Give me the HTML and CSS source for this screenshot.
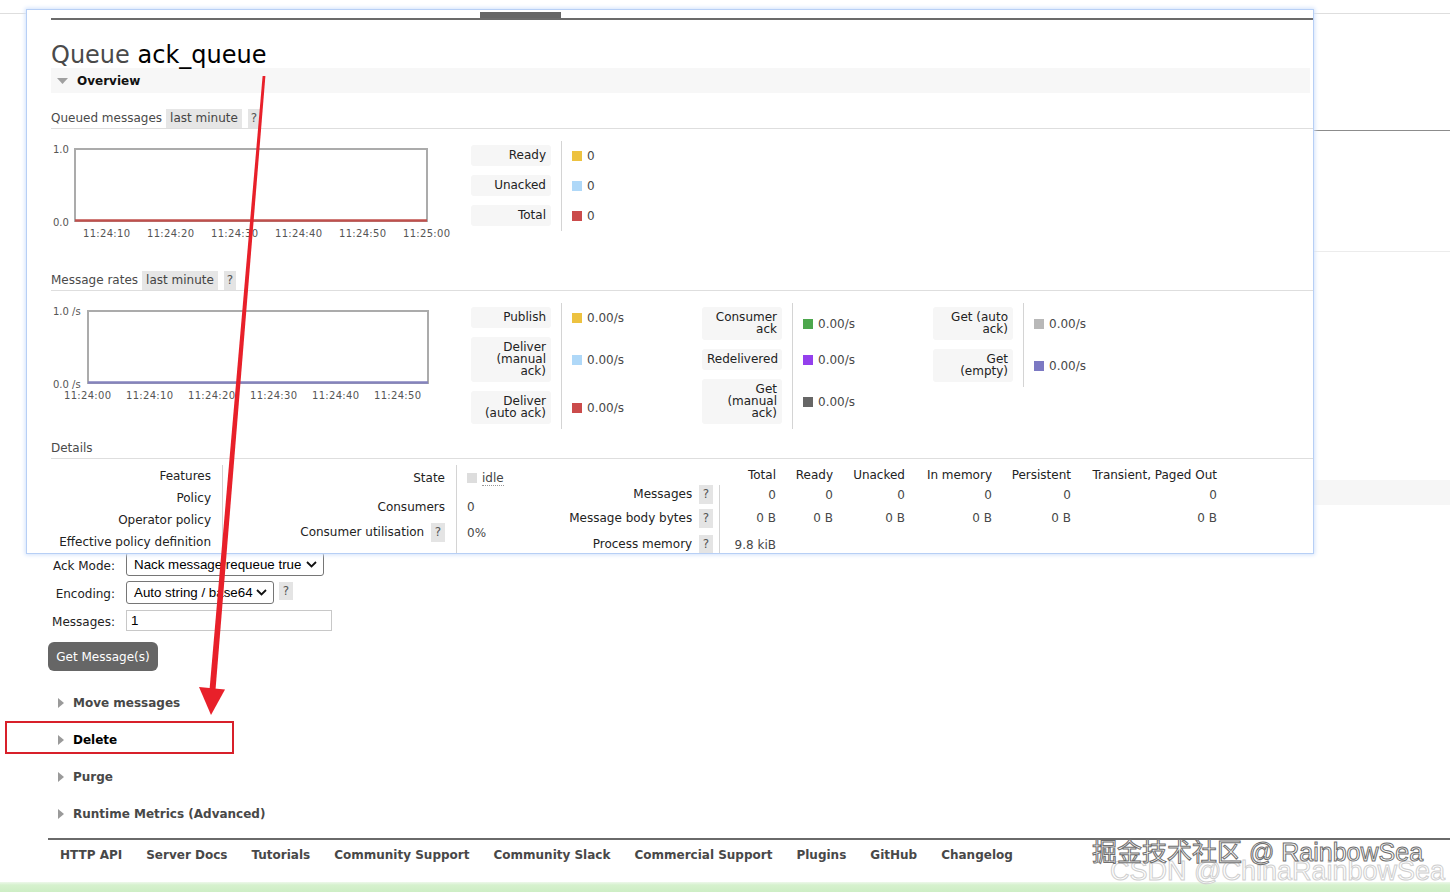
FILE: index.html
```html
<!DOCTYPE html>
<html>
<head>
<meta charset="utf-8">
<title>Queue ack_queue</title>
<link rel="stylesheet" href="styles.css">
</head>
<body>
<div class="page">
  <div class="bg-rule"></div>
  <div class="bg-b1"></div>
  <div class="bg-b2"></div>
  <div class="bg-b3"></div>

  <div class="getform">
    <div class="frow fr1">
      <label class="flabel">Ack Mode:</label>
      <div class="sel sel-ack"><span>Nack message requeue true</span><svg class="chev" width="11" height="7" viewBox="0 0 11 7"><path d="M1 1 L5.5 5.5 L10 1" fill="none" stroke="#111" stroke-width="1.8"/></svg></div>
    </div>
    <div class="frow fr2">
      <label class="flabel">Encoding:</label>
      <div class="sel sel-enc"><span>Auto string / base64</span><svg class="chev" width="11" height="7" viewBox="0 0 11 7"><path d="M1 1 L5.5 5.5 L10 1" fill="none" stroke="#111" stroke-width="1.8"/></svg></div>
      <span class="help fhelp">?</span>
    </div>
    <div class="frow fr3">
      <label class="flabel">Messages:</label>
      <div class="inp">1</div>
    </div>
    <button class="btn">Get Message(s)</button>
  </div>

  <div class="sections">
    <div class="sec"><svg width="6" height="10" viewBox="0 0 6 10"><polygon points="0,0 6,5 0,10" fill="#9a9a9a"/></svg><span>Move messages</span></div>
    <div class="sec sec-del"><svg width="6" height="10" viewBox="0 0 6 10"><polygon points="0,0 6,5 0,10" fill="#9a9a9a"/></svg><span>Delete</span></div>
    <div class="sec"><svg width="6" height="10" viewBox="0 0 6 10"><polygon points="0,0 6,5 0,10" fill="#9a9a9a"/></svg><span>Purge</span></div>
    <div class="sec"><svg width="6" height="10" viewBox="0 0 6 10"><polygon points="0,0 6,5 0,10" fill="#9a9a9a"/></svg><span>Runtime Metrics (Advanced)</span></div>
  </div>

  <div class="footer-rule"></div>
  <div class="footer">
    <a>HTTP API</a><a>Server Docs</a><a>Tutorials</a><a>Community Support</a><a>Community Slack</a><a>Commercial Support</a><a>Plugins</a><a>GitHub</a><a>Changelog</a>
  </div>
  <div class="greenbar"></div>
</div>

<div class="panel">
  <div class="ptab"></div>
  <div class="prule"></div>
  <h1 class="title">Queue <span class="qname">ack_queue</span></h1>
  <div class="overview"><svg width="11" height="6" viewBox="0 0 11 6"><polygon points="0,0 11,0 5.5,6" fill="#a0a0a0"/></svg><span>Overview</span></div>

  <div class="h3 h3-q"><span>Queued messages</span><span class="tag">last minute</span><span class="help hh">?</span></div>
  <div class="chartrow cr1">
    <svg class="chart" width="420" height="100" viewBox="0 0 420 100">
      <text x="2" y="12" class="yl">1.0</text>
      <text x="2" y="85" class="yl">0.0</text>
      <rect x="24" y="8" width="352" height="72" fill="#fff" stroke="#ababab" stroke-width="2"/>
      <line x1="24" y1="79.5" x2="376" y2="79.5" stroke="#c0504d" stroke-width="2.5"/>
      <text x="32" y="96" class="xl">11:24:10</text>
      <text x="96" y="96" class="xl">11:24:20</text>
      <text x="160" y="96" class="xl">11:24:30</text>
      <text x="224" y="96" class="xl">11:24:40</text>
      <text x="288" y="96" class="xl">11:24:50</text>
      <text x="352" y="96" class="xl">11:25:00</text>
    </svg>
    <table class="legend">
      <tr><th><div class="lbl">Ready</div></th><td><span class="sw c-yellow"></span>0</td></tr>
      <tr><th><div class="lbl">Unacked</div></th><td><span class="sw c-lblue"></span>0</td></tr>
      <tr><th><div class="lbl">Total</div></th><td><span class="sw c-red"></span>0</td></tr>
    </table>
  </div>

  <div class="h3 h3-r"><span>Message rates</span><span class="tag">last minute</span><span class="help hh">?</span></div>
  <div class="chartrow cr2">
    <svg class="chart" width="420" height="100" viewBox="0 0 420 100">
      <text x="2" y="12" class="yl">1.0 /s</text>
      <text x="2" y="85" class="yl">0.0 /s</text>
      <rect x="37" y="8" width="340" height="72" fill="#fff" stroke="#ababab" stroke-width="2"/>
      <line x1="37" y1="79.5" x2="377" y2="79.5" stroke="#8583bd" stroke-width="2.5"/>
      <text x="13" y="96" class="xl">11:24:00</text>
      <text x="75" y="96" class="xl">11:24:10</text>
      <text x="137" y="96" class="xl">11:24:20</text>
      <text x="199" y="96" class="xl">11:24:30</text>
      <text x="261" y="96" class="xl">11:24:40</text>
      <text x="323" y="96" class="xl">11:24:50</text>
    </svg>
    <div class="legcols">
      <div class="lcol">
        <table class="legend">
          <tr><th><div class="lbl">Publish</div></th><td><span class="sw c-yellow"></span>0.00/s</td></tr>
          <tr><th><div class="lbl">Deliver<br>(manual<br>ack)</div></th><td><span class="sw c-lblue"></span>0.00/s</td></tr>
          <tr><th><div class="lbl">Deliver<br>(auto ack)</div></th><td><span class="sw c-red"></span>0.00/s</td></tr>
        </table>
      </div>
      <div class="lcol">
        <table class="legend">
          <tr><th><div class="lbl">Consumer<br>ack</div></th><td><span class="sw c-green"></span>0.00/s</td></tr>
          <tr><th><div class="lbl">Redelivered</div></th><td><span class="sw c-purple"></span>0.00/s</td></tr>
          <tr><th><div class="lbl">Get<br>(manual<br>ack)</div></th><td><span class="sw c-dgray"></span>0.00/s</td></tr>
        </table>
      </div>
      <div class="lcol">
        <table class="legend">
          <tr><th><div class="lbl">Get (auto<br>ack)</div></th><td><span class="sw c-lgray"></span>0.00/s</td></tr>
          <tr><th><div class="lbl">Get<br>(empty)</div></th><td><span class="sw c-violet"></span>0.00/s</td></tr>
        </table>
      </div>
    </div>
  </div>

  <div class="h3 h3-d"><span>Details</span></div>
  <div class="details">
    <table class="kv kv-left">
      <tr><th>Features</th><td></td></tr>
      <tr><th>Policy</th><td></td></tr>
      <tr><th>Operator policy</th><td></td></tr>
      <tr><th>Effective policy definition</th><td></td></tr>
    </table>
    <table class="kv kv-mid">
      <tr class="m1"><th>State</th><td><span class="idle-sq"></span><span class="idle">idle</span></td></tr>
      <tr class="m2"><th>Consumers</th><td>0</td></tr>
      <tr class="m3"><th>Consumer utilisation <span class="help dh">?</span></th><td>0%</td></tr>
      <tr class="m4"><th></th><td></td></tr>
    </table>
    <table class="msgs">
      <tr class="mh"><th></th><th class="c1">Total</th><th class="c2">Ready</th><th class="c3">Unacked</th><th class="c4">In memory</th><th class="c5">Persistent</th><th class="c6">Transient, Paged Out</th></tr>
      <tr class="ma"><th class="rl">Messages <span class="help dh">?</span></th><td class="first">0</td><td>0</td><td>0</td><td>0</td><td>0</td><td>0</td></tr>
      <tr class="mb"><th class="rl">Message body bytes <span class="help dh">?</span></th><td class="first">0 B</td><td>0 B</td><td>0 B</td><td>0 B</td><td>0 B</td><td>0 B</td></tr>
      <tr class="mc"><th class="rl">Process memory <span class="help dh">?</span></th><td class="first">9.8 kiB</td><td></td><td></td><td></td><td></td><td></td></tr>
    </table>
  </div>
</div>

<svg class="arrow" width="1450" height="892" viewBox="0 0 1450 892">
  <polygon points="262.6,76 265.4,76 215.5,690 209.5,690" fill="#e8202a"/>
  <polygon points="199,687 225,689.5 211,715" fill="#e8202a"/>
</svg>
<div class="redbox"></div>
<div class="wm">
  <div class="wm2">CSDN @ChinaRainbowSea</div>
  <div class="wm1">掘金技术社区 @ RainbowSea</div>
</div>
</body>
</html>
```

FILE: styles.css
```css
* { box-sizing: border-box; }
html, body { margin: 0; padding: 0; }
body {
  width: 1450px;
  height: 892px;
  overflow: hidden;
  position: relative;
  background: #fff;
  font-family: "DejaVu Sans", Verdana, sans-serif;
  font-size: 12px;
  color: #484848;
}

/* ---------- background page ---------- */
.page { position: relative; }
.bg-rule { margin-top: 13px; height: 1px; background: #dedede; }
.bg-b1 { margin-left: 48px; height: 117px; border-bottom: 1px solid #8c8c8c; }
.bg-b2 { margin-left: 48px; height: 121px; border-bottom: 1px solid #ececec; }
.bg-b3 { margin-left: 48px; margin-top: 228px; height: 25px; background: #f6f6f6; }

.getform { margin-left: 48px; }
.frow { display: flex; align-items: center; }
.fr1 { margin-top: 47px; height: 24px; }
.fr2 { margin-top: 5px; height: 23px; }
.fr3 { margin-top: 6px; height: 21px; }
.flabel { width: 78px; padding-right: 11px; padding-top: 3px; text-align: right; color: #222; }
.sel {
  height: 100%;
  border: 1px solid #767676;
  border-radius: 3px;
  display: flex;
  align-items: center;
  justify-content: space-between;
  padding: 0 6px 0 7px;
  font-family: "Liberation Sans", Arial, sans-serif;
  font-size: 13.33px;
  color: #000;
  background: #fff;
}
.sel-ack { width: 198px; }
.sel-enc { width: 148px; }
.chev { flex: none; }
.inp {
  width: 206px;
  height: 100%;
  border: 1px solid #c8c8c8;
  padding-left: 4px;
  font-family: "Liberation Sans", Arial, sans-serif;
  font-size: 13.33px;
  color: #000;
  line-height: 19px;
}
.help {
  display: inline-block;
  background: #e4e4e4;
  color: #555;
  text-align: center;
}
.fhelp { margin-left: 5px; width: 14px; height: 18px; line-height: 18px; align-self: flex-start; margin-top: 1px; }
.btn {
  display: block;
  margin-top: 11px;
  width: 110px;
  height: 29px;
  border: none;
  border-radius: 6px;
  background: #666;
  color: #fff;
  font-family: "DejaVu Sans", Verdana, sans-serif;
  font-size: 12px;
  padding: 0;
}

.sections { margin-top: 13px; margin-left: 48px; }
.sec {
  height: 37px;
  display: flex;
  align-items: center;
  padding-left: 10px;
  gap: 9px;
  font-weight: bold;
  color: #484848;
}
.sec-del { color: #000; }

.footer-rule { margin-top: 6px; margin-left: 48px; height: 2px; background: #6a6a6a; }
.footer {
  margin-left: 48px;
  height: 42px;
  padding: 8px 0 0 12px;
  display: flex;
  gap: 24px;
  line-height: 14px;
}
.footer a { font-weight: bold; color: #484848; }
.greenbar {
  height: 10px;
  background: linear-gradient(#edf8ea 0, #d6f1ce 3px, #cdeec4 100%);
}

/* ---------- overlay screenshot panel ---------- */
.panel {
  position: absolute;
  left: 27px;
  top: 10px;
  width: 1286px;
  height: 543px;
  overflow: hidden;
  background: #fff;
  padding-left: 24px;
  box-shadow: 0 0 0 1px #b7cff5, 0 0 4px 2px #d2e2fb;
}
.ptab { margin-top: 2px; margin-left: 429px; width: 81px; height: 6px; background: #666; }
.prule { height: 2px; background: #6b6b6b; }
.title {
  margin: 23px 0 0;
  font-size: 24px;
  line-height: 25px;
  font-weight: normal;
  color: #4a4a4a;
}
.qname { color: #000; }
.overview {
  width: 1259px;
  height: 25px;
  background: #f7f7f7;
  display: flex;
  align-items: center;
  padding-left: 6px;
  gap: 9px;
  font-weight: bold;
  color: #111;
}

.h3 {
  display: flex;
  height: 20px;
  line-height: 19px;
  border-bottom: 1px solid #dedede;
  color: #4a4a4a;
}
.h3-q { margin-top: 16px; }
.h3-r { margin-top: 30px; }
.h3-d { margin-top: 10px; }
.tag { background: #e6e6e6; padding: 0 4px; margin-left: 4px; color: #444; }
.hh { padding: 0 3px; margin-left: 6px; }

.chartrow { display: flex; align-items: flex-start; margin-top: 12px; }
.chart { flex: none; display: block; }
.yl, .xl { font-family: "DejaVu Sans", Verdana, sans-serif; font-size: 10px; fill: #555; }
.xl { letter-spacing: 0.3px; }

.legend { border-collapse: separate; border-spacing: 0; }
.legend th { padding: 4px 10px 5px 0; font-weight: normal; vertical-align: top; }
.legend .lbl {
  width: 80px;
  background: #f6f6f6;
  border-radius: 3px;
  padding: 4px 5px 5px;
  line-height: 12px;
  text-align: right;
  white-space: nowrap;
  color: #222;
}
.legend td {
  border-left: 1px solid #d4d4d4;
  padding-left: 10px;
  vertical-align: middle;
  white-space: nowrap;
  color: #484848;
}
.sw { display: inline-block; width: 10px; height: 10px; margin-right: 5px; vertical-align: -1px; }
.c-yellow { background: #edc240; }
.c-lblue { background: #afd8f8; }
.c-red { background: #cb4b4b; }
.c-green { background: #4da74d; }
.c-purple { background: #9440ed; }
.c-dgray { background: #666; }
.c-lgray { background: #b8b8b8; }
.c-violet { background: #7c79c3; }

.legcols { display: flex; align-items: flex-start; }
.lcol { width: 231px; flex: none; }

/* details */
.details { display: flex; align-items: flex-start; margin-top: 6px; }
.kv { border-collapse: separate; border-spacing: 0; table-layout: fixed; }
.kv th { font-weight: normal; text-align: right; color: #222; padding: 0 11px 0 0; white-space: nowrap; }
.kv td { border-left: 1px solid #d4d4d4; padding: 0 0 0 10px; white-space: nowrap; color: #484848; }
.kv-left { width: 244px; }
.kv-left th { width: 171px; }
.kv-left tr { height: 22px; }
.kv-mid { width: 265px; }
.kv-mid th { width: 161px; }
.m1 { height: 25px; }
.m2 { height: 33px; }
.m3 { height: 19px; }
.m4 { height: 12px; }
.dh { width: 14px; height: 19px; line-height: 19px; margin-left: 3px; vertical-align: middle; }
.idle-sq { display: inline-block; width: 10px; height: 10px; background: #ddd; vertical-align: -1px; }
.idle { margin-left: 5px; border-bottom: 1px dotted #999; color: #444; }

.msgs { border-collapse: separate; border-spacing: 0; table-layout: fixed; }
.msgs th, .msgs td { padding: 0 10px 0 0; text-align: right; white-space: nowrap; font-weight: normal; }
.msgs .mh th { color: #222; }
.msgs .rl { width: 159px; padding-right: 6px; color: #222; }
.msgs td { color: #484848; }
.msgs td.first { border-left: 1px solid #d4d4d4; }
.c1 { width: 67px; }
.c2 { width: 57px; }
.c3 { width: 72px; }
.c4 { width: 87px; }
.c5 { width: 79px; }
.c6 { width: 146px; }
.mh { height: 20px; }
.ma { height: 19px; }
.mb { height: 28px; }
.mc { height: 25px; }

/* ---------- annotations ---------- */
.arrow { position: absolute; left: 0; top: 0; pointer-events: none; }
.redbox {
  position: absolute;
  left: 5px;
  top: 721px;
  width: 229px;
  height: 33px;
  border: 2px solid #d8202a;
}
.wm { position: absolute; left: 1090px; top: 836px; width: 360px; height: 56px; }
.wm1 {
  position: absolute;
  left: 2px;
  top: 0;
  font-family: "Liberation Sans", "Noto Sans CJK SC", sans-serif;
  font-size: 25px;
  line-height: 32px;
  color: #fff;
  -webkit-text-stroke: 1px #6e6e6e;
  white-space: nowrap;
}
.wm2 {
  position: absolute;
  left: 20px;
  top: 19px;
  font-family: "Liberation Sans", "Noto Sans CJK SC", sans-serif;
  font-size: 27px;
  line-height: 32px;
  color: #fff;
  -webkit-text-stroke: 1px #cfcfcf;
  white-space: nowrap;
}
```
